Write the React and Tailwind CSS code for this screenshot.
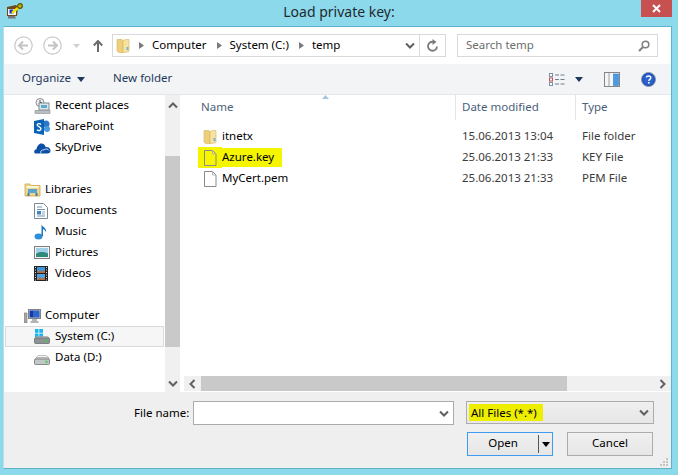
const F = { fontFamily: '"Noto Sans", "Open Sans", sans-serif' };

function Caret({ className = "" }) {
  return <svg width="8" height="5" viewBox="0 0 8 5" className={className}><path d="M0 0h8L4 5z" fill="#1e395b" /></svg>;
}
function Chev({ dir = "down", color = "#606060" }) {
  const d = { down: "M1 1.5l4 4 4-4", up: "M1 5.5l4-4 4 4", left: "M5.5 1l-4 4 4 4", right: "M1.5 1l4 4-4 4" }[dir];
  const box = dir === "down" || dir === "up" ? "0 0 10 7" : "0 0 7 10";
  const s = dir === "down" || dir === "up" ? [10, 7] : [7, 10];
  return <svg width={s[0]} height={s[1]} viewBox={box}><path d={d} fill="none" stroke={color} strokeWidth="2" /></svg>;
}
function Crumb() {
  return <svg width="5" height="7" viewBox="0 0 5 7"><path d="M0 0l5 3.5L0 7z" fill="#7a7a7a" /></svg>;
}
function FolderIcon({ w = 14, h = 15 }) {
  return (
    <svg width={w} height={h} viewBox="0 0 14 15">
      <path d="M1 1.5h5l1 1v12H2.5L1 13z" fill="#eecf7b" stroke="#d6b660" strokeWidth=".6" />
      <path d="M7 2.5l3-1h3v12l-6 1.5z" fill="#f7e2a0" stroke="#d6b660" strokeWidth=".6" />
      <rect x="10.5" y="9" width="2" height="3" fill="#7fb2d8" />
    </svg>
  );
}
function PageIcon({ fill = "#ffffff" }) {
  return (
    <svg width="14" height="16" viewBox="0 0 14 16">
      <path d="M1.5.5h8l3.5 3.5v11.5H1.500z" fill={fill} stroke="#8a8a8a" />
      <path d="M9.500.5V4H13" fill="none" stroke="#b5b5b5" />
    </svg>
  );
}
function RecentIcon() {
  return (
    <svg width="17" height="16" viewBox="0 0 17 16">
      <circle cx="6" cy="4.500" r="4" fill="#f2f2f2" stroke="#8c8c8c" />
      <path d="M6 2v2.500h2" stroke="#555" fill="none" />
      <rect x="5" y="5" width="10" height="7" fill="#dfe6ea" stroke="#7d8a92" />
      <rect x="7" y="7" width="6" height="3" fill="#5da9cf" />
      <rect x="1" y="12.500" width="15" height="3" fill="#b9bec2" stroke="#8b8f92" strokeWidth=".6" />
    </svg>
  );
}
function SharePointIcon() {
  return (
    <svg width="17" height="16" viewBox="0 0 17 16">
      <circle cx="12" cy="5" r="3.500" fill="#2a79c9" />
      <circle cx="13" cy="10" r="3" fill="#4a9ae0" />
      <path d="M0 2l10-2v16L0 14z" fill="#0a63b8" />
      <path d="M7 5.500C5.500 4 3.200 4.500 3.200 6S7 7.800 7 9.800 4.300 12 3 10.700" fill="none" stroke="#fff" strokeWidth="1.400" />
    </svg>
  );
}
function SkyDriveIcon() {
  return (
    <svg width="17" height="12" viewBox="0 0 17 12">
      <path d="M1.500 11.500C-.5 11-.2 7.500 2.500 7.300 3 3.500 5.500 1 8 1.500c2 .3 3.300 1.700 3.500 3.500 3-.5 5.300 1.500 5 4-.2 1.700-1.500 2.500-3 2.500z" fill="#0b4fa8" />
      <path d="M7 11.500c-1-2 .5-4 3-3.500 1-1.500 4-1.500 5 .5" fill="none" stroke="#fff" strokeWidth=".8" />
    </svg>
  );
}
function LibrariesIcon() {
  return (
    <svg width="17" height="15" viewBox="0 0 17 15">
      <path d="M1 2h5l1 1.500h9V14H1z" fill="#f0d688" stroke="#c9a64f" strokeWidth=".8" />
      <rect x="2.500" y="4" width="12" height="2" fill="#fdf6d8" />
      <rect x="4" y="7" width="9" height="4" fill="#5ba3d0" />
      <path d="M3.500 14v-3h2v3zM11.500 14v-3h2v3z" fill="#3d7ea8" />
    </svg>
  );
}
function DocsIcon() {
  return (
    <svg width="14" height="16" viewBox="0 0 14 16">
      <path d="M.5.500h9l4 4v11H.5z" fill="#fff" stroke="#7d8790" />
      <path d="M3 4h5M3 6.500h8M3 13h8" stroke="#6d93b8" />
      <rect x="3" y="8" width="4" height="3.500" fill="#3f86c6" />
      <path d="M8 9h3M8 11h3" stroke="#9aa7b3" />
    </svg>
  );
}
function MusicIcon() {
  return (
    <svg width="14" height="16" viewBox="0 0 14 16">
      <ellipse cx="4.500" cy="12.500" rx="4" ry="3" fill="#2f8fd6" />
      <path d="M7.500 12V.5c.5 2.500 5.500 3 4.500 8-.3-2-2-3-3-3.200V12z" fill="#1f78c2" />
    </svg>
  );
}
function PicturesIcon() {
  return (
    <svg width="16" height="13" viewBox="0 0 16 13">
      <rect x=".5" y=".5" width="15" height="12" fill="#f4f4f4" stroke="#7f7f7f" />
      <rect x="2" y="2" width="12" height="9" fill="#9fd0e8" />
      <path d="M2 8c3-2.500 7-2.500 12-.5V11H2z" fill="#2f8a7a" />
    </svg>
  );
}
function VideosIcon() {
  return (
    <svg width="14" height="15" viewBox="0 0 14 15">
      <rect width="14" height="15" fill="#222" />
      <rect x="3" y="1" width="8" height="6" fill="#3f95d8" />
      <rect x="3" y="8" width="8" height="6" fill="#4fa3e0" />
      <path d="M3 7l3-3 2 2 3-2v3zM3 14l3-3 2 2 3-2v3z" fill="#b86a3a" />
      <path d="M1 1.500h1M1 4h1M1 6.500h1M1 9h1M1 11.500h1M1 14h1M12 1.500h1M12 4h1M12 6.500h1M12 9h1M12 11.500h1M12 14h1" stroke="#ddd" />
    </svg>
  );
}
function ComputerIcon() {
  return (
    <svg width="17" height="14" viewBox="0 0 17 14">
      <rect x="0" y="4" width="3" height="10" fill="#a8a8a0" stroke="#77776f" strokeWidth=".6" />
      <rect x="4.500" y=".5" width="12" height="9" fill="#d8dde0" stroke="#7e8488" />
      <rect x="5.500" y="1.500" width="10" height="7" fill="#1736a8" />
      <rect x="9" y="2" width="6" height="6" fill="#2c66c8" />
      <path d="M8 11h5M6.500 13h8" stroke="#9a9fa2" strokeWidth="1.500" />
    </svg>
  );
}
function DriveIcon({ win }) {
  return (
    <svg width="16" height="16" viewBox="0 0 16 16">
      {win && <path d="M1 0h3.500v3.800H1zM5.300 0H9v3.800H5.300zM1 4.600h3.500v3.800H1zM5.300 4.600H9v3.800H5.300z" fill="#18b5ee" />}
      {!win && <path d="M2 8l2-2.500h8.500L15 8z" fill="#f2f3f3" stroke="#a0a0a0" strokeWidth=".6" />}
      <path d="M1 9l1.500-1.500h11L15 9z" fill={win ? "#c6c9cb" : "#f0f0f0"} stroke="#8a8a8a" strokeWidth=".5" />
      <rect x=".5" y="9" width="15" height="5.500" rx="1" fill={win ? "#8d9295" : "#c4c7c8"} stroke="#5f6366" strokeWidth=".7" />
      <rect x="11.500" y="10.800" width="2" height="2" fill="#34d04c" />
    </svg>
  );
}
function Gear() {
  return (
    <svg width="17" height="16" viewBox="0 0 17 16">
      <path d="M1 4l9-2 2 2-1 9H1z" fill="#6e4a18" />
      <path d="M2 6h8v6H2z" fill="#f6f6f6" />
      <path d="M3.500 6.500h4v4h-4z" fill="#1d2fc4" />
      <path d="M6 10l7-6" stroke="#f4e400" strokeWidth="2.400" />
      <circle cx="14" cy="3" r="2.300" fill="#c9b400" stroke="#5e5200" strokeWidth="1.200" />
      <path d="M2 13h7l1 2.500H2z" fill="#777" />
    </svg>
  );
}

function NavRow({ icon, label, child, selected, blank }) {
  if (blank) return <div className="h-[21px]" />;
  const cls = selected
    ? "bg-[#f6f6f6] border border-[#d9d9d9] ml-px w-[159px] pl-[28px]"
    : child ? "pl-[30px]" : "pl-[20px]";
  return (
    <div className={`h-[21px] flex items-center ${cls}`}>
      <span className="w-[21px] flex justify-start items-center shrink-0">{icon}</span>
      <span className="text-[11.5px] text-black leading-none whitespace-nowrap pb-[2px]">{label}</span>
    </div>
  );
}

function FileRow({ icon, name, date, type, hl }) {
  return (
    <div className="h-[21px] flex items-center text-[11.5px] leading-none text-[#1a1a1a]">
      <span className={`ml-[14px] w-[24px] h-[21px] flex items-center pl-[5px] shrink-0 ${hl ? "bg-[#f5f500]" : ""}`}>{icon}</span>
      <span className={`w-[60px] shrink-0 h-[19px] flex items-center whitespace-nowrap text-black pb-[2px] ${hl ? "bg-[#f5f500]" : ""}`}>{name}</span>
      <span className="ml-[180px] w-[120px] shrink-0 text-[#3c3c3c] pb-[2px]">{date}</span>
      <span className="text-[#3c3c3c] pb-[2px]">{type}</span>
    </div>
  );
}

export default function App() {
  return (
    <div style={F} className="w-[678px] h-[475px] bg-[#8cd9eb] flex flex-col overflow-hidden">
      <div className="h-[26px] flex items-center relative shrink-0">
        <span className="absolute left-[6px] top-[3px]"><Gear /></span>
        <span className="w-full text-center text-[14px] text-[#1f2a30] leading-none -mt-[2px]">Load private key:</span>
        <div className="absolute left-[641px] top-0 w-[31px] h-[17px] bg-[#c75050] flex items-center justify-center">
          <svg width="9" height="9" viewBox="0 0 9 9"><path d="M1 1l7 7M8 1L1 8" stroke="#fff" strokeWidth="2" /></svg>
        </div>
      </div>

      <div className="ml-[3px] w-[669px] h-[443px] border border-[#5fb3c8] border-l-[#b9dfe8] bg-white flex flex-col shrink-0">
        {/* address */}
        <div className="h-[37px] flex items-center shrink-0">
          <div className="ml-[10px] flex items-center">
            <svg width="19" height="19" viewBox="0 0 19 19"><circle cx="9.500" cy="9.500" r="8.700" fill="#fff" stroke="#c9c9c9" strokeWidth="1.200" /><path d="M5 9.500h9M9 5.500l-4 4 4 4" fill="none" stroke="#c4c4c4" strokeWidth="2" /></svg>
            <svg width="19" height="19" viewBox="0 0 19 19" className="ml-[10px]"><circle cx="9.500" cy="9.500" r="8.700" fill="#fff" stroke="#c9c9c9" strokeWidth="1.200" /><path d="M5 9.500h9M10 5.500l4 4-4 4" fill="none" stroke="#c4c4c4" strokeWidth="2" /></svg>
            <svg width="7" height="4" viewBox="0 0 7 4" className="ml-[11px]"><path d="M0 0h7L3.500 4z" fill="#d0d0d0" /></svg>
            <svg width="10" height="12" viewBox="0 0 10 12" className="ml-[13px]"><path d="M5 12V1M.8 5.500L5 1l4.200 4.500" fill="none" stroke="#6b6b6b" strokeWidth="2" /></svg>
          </div>
          <div className="ml-[9px] w-[334px] h-[23px] border border-[#d9d9d9] flex items-center shrink-0 text-[11.5px] text-black leading-none">
            <span className="ml-[3px] flex"><FolderIcon /></span>
            <span className="ml-[9px] flex"><Crumb /></span>
            <span className="ml-[8px] pb-[2px]">Computer</span>
            <span className="ml-[10px] flex"><Crumb /></span>
            <span className="ml-[8px] pb-[2px]">System (C:)</span>
            <span className="ml-[10px] flex"><Crumb /></span>
            <span className="ml-[8px] pb-[2px]">temp</span>
            <span className="ml-auto mr-[4px] flex"><Chev /></span>
            <span className="w-px h-full bg-[#d9d9d9]" />
            <span className="w-[25px] flex justify-center">
              <svg width="12" height="13" viewBox="0 0 12 13"><path d="M10 7.500A4.500 4.500 0 1 1 6 2.800" fill="none" stroke="#7a7a7a" strokeWidth="1.800" /><path d="M5.500 0l4 3-4 3z" fill="#7a7a7a" /></svg>
            </span>
          </div>
          <div className="ml-[11px] w-[201px] h-[23px] border border-[#d9d9d9] flex items-center text-[11.5px] leading-none text-[#6d6d6d] shrink-0 pl-[8px]">
            <span className="pb-[2px]">Search temp</span>
            <svg width="12" height="12" viewBox="0 0 12 12" className="ml-auto mr-[7px]"><circle cx="7.500" cy="4.500" r="3.300" fill="none" stroke="#808080" strokeWidth="1.600" /><path d="M5 7l-4 4" stroke="#808080" strokeWidth="2" /></svg>
          </div>
        </div>

        {/* toolbar */}
        <div className="h-[31px] bg-[#f3f4f6] border-b border-[#e4e7ea] flex items-center shrink-0 text-[11.5px] leading-none text-[#1e395b]">
          <span className="ml-[18px] pb-[2px]">Organize</span>
          <Caret className="ml-[6px]" />
          <span className="ml-[28px] pb-[2px]">New folder</span>
          <svg width="16" height="13" viewBox="0 0 16 13" className="ml-auto">
            <rect x=".5" y=".5" width="3" height="3" fill="#fff" stroke="#7f8fa3" />
            <rect x=".5" y="5" width="3" height="3" fill="#fff" stroke="#c05050" />
            <rect x=".5" y="9.500" width="3" height="3" fill="#fff" stroke="#7f8fa3" />
            <path d="M6 2h4M11.500 2H15.500M6 6.500h4M11.500 6.500H15.500M6 11h4M11.500 11H15.500" stroke="#6f7f92" />
          </svg>
          <Caret className="ml-[10px]" />
          <svg width="16" height="15" viewBox="0 0 16 15" className="ml-[21px]">
            <rect x=".5" y=".5" width="15" height="14" fill="#f5f5f5" stroke="#868686" />
            <path d="M5 1v13" stroke="#a0a0a0" />
            <rect x="9.500" y="2" width="5" height="11.500" fill="#4a9be6" stroke="#2e7fce" strokeWidth=".6" />
          </svg>
          <svg width="15" height="15" viewBox="0 0 15 15" className="ml-[21px] mr-[15px]">
            <circle cx="7.500" cy="7.500" r="7" fill="#1d4fb8" stroke="#8a98b0" />
            <circle cx="7.500" cy="7.500" r="5.200" fill="#2a63d0" />
            <path d="M5.300 5.500c.3-2 4.500-2 4.500.3 0 1.500-2 1.700-2 3.200" fill="none" stroke="#fff" strokeWidth="1.400" />
            <rect x="7" y="10" width="1.600" height="1.600" fill="#fff" />
          </svg>
        </div>

        {/* main */}
        <div className="h-[297px] flex shrink-0 overflow-hidden">
          <div className="w-[161px] shrink-0 overflow-hidden">
            <NavRow child icon={<RecentIcon />} label="Recent places" />
            <NavRow child icon={<SharePointIcon />} label="SharePoint" />
            <NavRow child icon={<SkyDriveIcon />} label="SkyDrive" />
            <NavRow blank />
            <NavRow icon={<LibrariesIcon />} label="Libraries" />
            <NavRow child icon={<DocsIcon />} label="Documents" />
            <NavRow child icon={<MusicIcon />} label="Music" />
            <NavRow child icon={<PicturesIcon />} label="Pictures" />
            <NavRow child icon={<VideosIcon />} label="Videos" />
            <NavRow blank />
            <NavRow icon={<ComputerIcon />} label="Computer" />
            <NavRow child selected icon={<DriveIcon win />} label="System (C:)" />
            <NavRow child icon={<DriveIcon />} label="Data (D:)" />
          </div>
          <div className="w-[15px] shrink-0 bg-[#f0f0f0] flex flex-col items-center">
            <div className="h-[61px] w-full shrink-0 flex justify-center pt-[7px]"><Chev dir="up" /></div>
            <div className="h-[191px] w-full shrink-0 bg-[#c9c9c9]" />
            <div className="mt-auto h-[15px] mb-px w-full flex justify-center items-center"><Chev /></div>
          </div>
          <div className="flex-1 ml-[4px] flex flex-col min-w-0">
            <div className="h-[25px] shrink-0 relative flex items-center text-[11.5px] leading-none text-[#4c607a]">
              <svg width="7" height="4" viewBox="0 0 7 4" className="absolute left-[138px] top-0"><path d="M0 4L3.500 0 7 4z" fill="#a9c5dc" /></svg>
              <span className="ml-[17px] w-[254px] shrink-0 pb-[2px]">Name</span>
              <span className="w-px h-[25px] bg-[#e5e5e5] mr-[6px] shrink-0" />
              <span className="w-[113px] shrink-0 pb-[2px]">Date modified</span>
              <span className="w-px h-[25px] bg-[#e5e5e5] mr-[6px] shrink-0" />
              <span className="pb-[2px]">Type</span>
            </div>
            <div className="flex-1 pt-[6px]">
              <FileRow icon={<FolderIcon />} name="itnetx" date="15.06.2013 13:04" type="File folder" />
              <FileRow hl icon={<PageIcon fill="#f6f600" />} name="Azure.key" date="25.06.2013 21:33" type="KEY File" />
              <FileRow icon={<PageIcon />} name="MyCert.pem" date="25.06.2013 21:33" type="PEM File" />
            </div>
            <div className="h-[15px] mb-px shrink-0 bg-[#f0f0f0] flex items-center">
              <div className="w-[17px] flex justify-center shrink-0"><Chev dir="left" /></div>
              <div className="w-[366px] h-full bg-[#c9c9c9] shrink-0" />
              <div className="ml-auto w-[17px] flex justify-center shrink-0"><Chev dir="right" /></div>
            </div>
          </div>
        </div>

        {/* bottom */}
        <div className="flex-1 bg-[#efefef] relative text-[11.5px] leading-none text-black">
          <div className="flex items-start pt-[9px]">
            <span className="ml-[130px] w-[59px] h-[24px] flex items-center shrink-0 whitespace-nowrap">File name:</span>
            <div className="w-[261px] h-[24px] bg-white border border-[#ababab] flex items-center justify-end pr-[4px] shrink-0"><Chev /></div>
            <div className="ml-[12px] w-[188px] h-[23px] bg-linear-to-b from-[#f0f0f0] to-[#e6e6e6] border border-[#acacac] flex items-center pl-[2px] shrink-0">
              <span className="bg-[#eeee00] h-[17px] w-[74px] flex items-center pl-[2px]">All Files (*.*)</span>
              <span className="ml-auto mr-[4px] flex"><Chev /></span>
            </div>
          </div>
          <div className="flex justify-end mt-[7px] pr-[18px]">
            <div className="w-[86px] h-[24px] bg-linear-to-b from-[#f0f0f0] to-[#e6e6e6] border border-[#3d9bf0] flex items-center">
              <span className="w-[70px] text-center pb-[2px]">Open</span>
              <span className="w-px h-[18px] bg-[#555]" />
              <svg width="8" height="5" viewBox="0 0 8 5" className="ml-[3px]"><path d="M0 0h8L4 5z" fill="#000" /></svg>
            </div>
            <div className="ml-[14px] w-[86px] h-[24px] bg-linear-to-b from-[#f0f0f0] to-[#e6e6e6] border border-[#acacac] flex items-center justify-center pb-[2px]">Cancel</div>
          </div>
          <svg width="8" height="8" viewBox="0 0 8 8" className="absolute right-[3px] bottom-[2px]">
            <path d="M6 0h2v2H6zM3 3h2v2H3zM6 3h2v2H6zM0 6h2v2H0zM3 6h2v2H3zM6 6h2v2H6z" fill="#c4c4c4" />
          </svg>
        </div>
      </div>
    </div>
  );
}
